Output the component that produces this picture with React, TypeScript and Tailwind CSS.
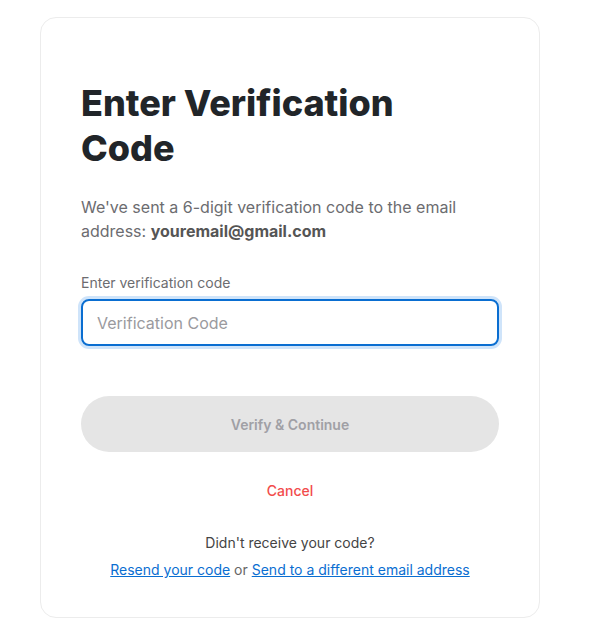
export default function App() {
  return (
    <div className="min-h-screen bg-white pt-[17px] pl-10 font-['Inter',sans-serif]">
      <div className="flex h-[601px] w-[500px] flex-col rounded-2xl border border-[#ececec] bg-white px-10 pt-[63px]">
        <h1 className="max-w-[360px] text-[36px] font-extrabold leading-[45px] text-[#212529]">
          Enter Verification Code
        </h1>

        <p className="mt-[24px] text-[16px] leading-6 text-[#6c6c70]">
          We've sent a 6-digit verification code to the email address:{' '}
          <span className="font-bold text-[#555]">youremail@gmail.com</span>
        </p>

        <label className="mt-[30px] text-[14px] leading-5 text-[#6c6c70]">
          Enter verification code
        </label>
        <input
          autoFocus
          placeholder="Verification Code"
          className="mt-[6px] h-[47px] w-full rounded-lg border-2 border-[#0a6ed1] px-[14px] text-[16px] text-[#212529] outline-none ring-[3px] ring-[#cfe4fa] placeholder:text-[#9a9a9e]"
        />

        <button
          disabled
          className="mt-[50px] h-[56px] w-full rounded-full bg-[#e5e5e5] text-[14px] font-semibold text-[#a0a0a5]"
        >
          Verify &amp; Continue
        </button>

        <button className="mt-[28px] self-center text-[14px] font-medium text-[#f24c4c]">
          Cancel
        </button>

        <div className="mt-[28px] text-center text-[14px] leading-[27px] text-[#444]">
          <p>Didn't receive your code?</p>
          <p>
            <a href="#" className="text-[#0a6ed1] underline">
              Resend your code
            </a>{' '}
            <span className="text-[#666]">or</span>{' '}
            <a href="#" className="text-[#0a6ed1] underline">
              Send to a different email address
            </a>
          </p>
        </div>
      </div>
    </div>
  );
}
